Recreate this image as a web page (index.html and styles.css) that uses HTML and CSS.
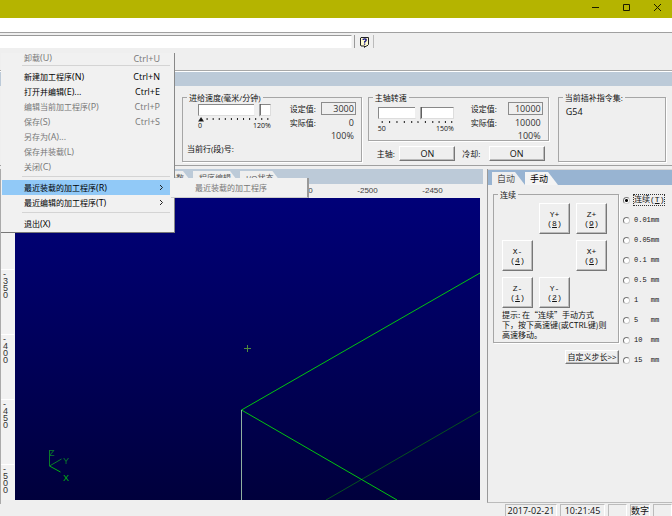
FILE: index.html
```html
<!DOCTYPE html>
<html lang="zh-CN">
<head>
<meta charset="utf-8">
<title>加工程序</title>
<link rel="stylesheet" href="styles.css">
</head>
<body>
<header class="titlebar">
  <button class="winbtn" aria-label="最小化"><svg width="9" height="9" viewBox="0 0 9 9"><path d="M1 4.500h7"/></svg></button>
  <button class="winbtn" aria-label="最大化"><svg width="9" height="9" viewBox="0 0 9 9"><path d="M1.500 1.500h6v6h-6z"/></svg></button>
  <button class="winbtn" aria-label="关闭"><svg width="9" height="9" viewBox="0 0 9 9"><path d="M1 1l7 7M8 1l-7 7"/></svg></button>
</header>
<div class="menubar"></div>
<div class="toolbar">
  <input class="command" type="text" aria-label="命令">
  <button class="help" aria-label="帮助"><svg width="11" height="12" viewBox="0 0 11 12"><path d="M2 1.500h7.500v7l-1.500 1.500h-1l-1.500 1.500v-1.500h-3.500l-.5-1v-7z" fill="#fffbd0" stroke="#222"/><path d="M4 4q0-1.200 1.600-1.200t1.600 1.100q0 .8-1.500 1.800v1M5.600 7.600v1.200" fill="none" stroke="#101080" stroke-width="1.300"/></svg></button>
</div>
<div class="band"></div>

<section class="panel">
  <fieldset class="group feed">
    <legend>进给速度(毫米/分钟)</legend>
    <div class="readout">
      <div class="slider">
        <input type="range" min="0" max="120" value="103" aria-label="进给速度">
        <svg class="ticks" viewBox="0 0 72 5" preserveAspectRatio="none"><path d="M1 4l2-3 2 3zM9 1v2M15 1v2M21 1v2M27 1v2M33 1v2M39 1v2M45 1v2M51 1v2M57 1v2M63 1v2M69 1v2"/></svg>
        <div class="scale"><span>0</span><span>120%</span></div>
      </div>
      <label for="feed-set">设定值:</label>
      <input class="value" id="feed-set" type="text" value="3000">
      <span>实际值:</span><span class="num">0</span>
      <span></span><span class="num">100%</span>
    </div>
    <div class="line-no">当前行(段)号:</div>
  </fieldset>
  <div class="spindle">
    <fieldset class="group">
      <legend>主轴转速</legend>
      <div class="readout wide">
        <div class="slider low">
          <input type="range" min="50" max="150" value="104" aria-label="主轴转速">
          <svg class="ticks" viewBox="0 0 72 5" preserveAspectRatio="none"><path d="M4 1v2M11 1v2M18 1v2M25 1v2M32 1v2M38 1v2M45 1v2M52 1v2M58 1v2M64 1v2M70 1v2"/></svg>
          <div class="scale"><span>50</span><span>150%</span></div>
        </div>
        <label for="spin-set">设定值:</label>
        <input class="value" id="spin-set" type="text" value="10000">
        <span>实际值:</span><span class="num">10000</span>
        <span></span><span class="num">100%</span>
      </div>
    </fieldset>
    <div class="switches">
      <span id="sp">主轴:</span><button class="raised on" aria-describedby="sp">ON</button>
      <span id="cool">冷却:</span><button class="raised on" aria-describedby="cool">ON</button>
    </div>
  </div>
  <fieldset class="group codes">
    <legend>当前插补指令集:</legend>
    <p>G54</p>
  </fieldset>
</section>

<main class="work">
  <section class="view">
    <nav class="tabs view-tabs">
      <button class="tab">参数</button><button class="tab">程序编辑</button><button class="tab">I/O状态</button>
    </nav>
    <div class="ruler-x"><span>-2550</span><span>-2500</span><span>-2450</span></div>
    <div class="stage">
      <div class="ruler-y"><span>-350</span><span>-400</span><span>-450</span><span>-500</span></div>
      <svg class="plot" viewBox="0 0 465 302" preserveAspectRatio="xMinYMin slice">
        <path d="M465 213L311 302" stroke="#06501f"/>
        <path d="M465 75L226.500 212L382 302" stroke="#00c410"/>
        <path d="M226.500 212V302" stroke="#8fb0a0"/>
        <path d="M229 150.500h7M232.500 147v7" stroke="#4f8a3c"/>
        <path d="M34.500 252v16M34.500 268l12-7" stroke="#0a7a2a"/>
        <path d="M34.500 268l11 6" stroke="#00b010"/>
        <text x="34" y="258">Z</text><text x="48" y="266">Y</text><text x="48" y="283" class="bright">X</text>
      </svg>
    </div>
  </section>

  <section class="jog">
    <nav class="tabs jog-tabs">
      <button class="tab">自动</button><button class="tab active">手动</button>
    </nav>
    <div class="jog-body">
      <div class="jog-left">
        <fieldset class="group moves">
          <legend>连续</legend>
          <div class="pad">
            <button class="raised yp">Y+<br>(<u>8</u>)</button>
            <button class="raised zp">Z+<br>(<u>9</u>)</button>
            <button class="raised xm">X-<br>(<u>4</u>)</button>
            <button class="raised xp">X+<br>(<u>6</u>)</button>
            <button class="raised zm">Z-<br>(<u>1</u>)</button>
            <button class="raised ym">Y-<br>(<u>2</u>)</button>
          </div>
          <p class="hint">提示: 在“连续”手动方式<br>下，按下高速键(或CTRL键)则<br>高速移动。</p>
        </fieldset>
        <button class="raised custom">自定义步长&gt;&gt;</button>
      </div>
      <div class="steps">
        <label class="first"><input type="radio" name="step" checked><span>连续(<u>T</u>)</span></label>
        <label><input type="radio" name="step"><span>0.01mm</span></label>
        <label><input type="radio" name="step"><span>0.05mm</span></label>
        <label><input type="radio" name="step"><span>0.1 mm</span></label>
        <label><input type="radio" name="step"><span>0.5 mm</span></label>
        <label><input type="radio" name="step"><span>1   mm</span></label>
        <label><input type="radio" name="step"><span>5   mm</span></label>
        <label><input type="radio" name="step"><span>10  mm</span></label>
        <label><input type="radio" name="step"><span>15  mm</span></label>
      </div>
    </div>
  </section>
</main>

<footer class="status">
  <span class="date">2017-02-21</span><span class="time">10:21:45</span><span class="blank"></span><span class="mode">数字</span><span class="blank"></span>
</footer>

<div class="menu">
  <button class="item off cut"><span>卸载<i>(U)</i></span><kbd>Ctrl+U</kbd></button>
  <hr>
  <button class="item"><span>新建加工程序<i>(N)</i></span><kbd>Ctrl+N</kbd></button>
  <button class="item"><span>打开并编辑<i>(E)...</i></span><kbd>Ctrl+E</kbd></button>
  <button class="item off"><span>编辑当前加工程序<i>(P)</i></span><kbd>Ctrl+P</kbd></button>
  <button class="item off"><span>保存<i>(S)</i></span><kbd>Ctrl+S</kbd></button>
  <button class="item off"><span>另存为<i>(A)...</i></span></button>
  <button class="item off"><span>保存并装载<i>(L)</i></span></button>
  <button class="item off"><span>关闭<i>(C)</i></span></button>
  <hr>
  <button class="item picked"><span>最近装载的加工程序<i>(R)</i></span><svg width="5" height="7" viewBox="0 0 5 7"><path d="M1 1l2.500 2.500L1 6"/></svg></button>
  <button class="item"><span>最近编辑的加工程序<i>(T)</i></span><svg width="5" height="7" viewBox="0 0 5 7"><path d="M1 1l2.500 2.500L1 6"/></svg></button>
  <hr>
  <button class="item"><span>退出<i>(X)</i></span></button>
</div>
<div class="submenu"><button class="item off">最近装载的加工程序</button></div>
</body>
</html>
```
FILE: styles.css
```css
* { box-sizing: border-box; }

body {
  margin: 0;
  height: 100vh;
  display: flex;
  flex-direction: column;
  position: relative;
  background: #efefef;
  color: #111;
  font: 8px/10px "Open Sans", "Noto Sans CJK SC", sans-serif;
}

button, input { font: inherit; color: inherit; margin: 0; }
button { padding: 0; border: 0; background: none; }
p { margin: 0; }

.titlebar {
  height: 18px;
  display: flex;
  justify-content: flex-end;
  gap: 22px;
  padding: 0 10px 3px 0;
  background: #b5b400;
}
.winbtn { width: 9px; display: flex; align-items: center; }
.winbtn svg { fill: none; stroke: #1c1c00; }

.menubar { height: 15px; background: #fff; border-bottom: 1px solid #a0a0a0; }

.toolbar { height: 37px; display: flex; align-items: flex-start; padding-top: 2px; }
.command {
  width: 352px;
  height: 13px;
  border: 0;
  border-top: 1px solid #999;
  border-right: 1px solid #f6f6f6;
  background: #fff;
  outline: 0;
}
.help {
  height: 13px;
  margin-left: 2px;
  padding: 0 3px 0 4px;
  border-left: 1px solid #999;
  border-right: 1px solid #bbb;
}
.help svg { display: block; }

.band { height: 16px; background: #bccad8; border-top: 1px solid #a8a8a8; box-shadow: inset 0 1px #fff; }

/* Machine readouts */
.panel {
  display: flex;
  align-items: flex-start;
  height: 80px;
  padding: 7px 6px 0 182px;
  border-bottom: 1px solid #a0a0a0;
}
.group {
  margin: 0;
  padding: 0;
  min-width: 0;
  border: 1px solid #a6a6a6;
  box-shadow: 1px 1px #fff;
}
.group legend { margin-left: 4px; padding: 0 2px; line-height: 9px; }
.feed { flex: 179 1 0; height: 69px; margin-right: 6px; }
.spindle { flex: 182 1 0; margin-right: 9px; }
.codes { flex: 107 1 0; height: 69px; }
.codes p { padding: 5px 7px; font-size: 9px; }

.readout {
  display: grid;
  grid-template-columns: 1fr 28px 38px;
  grid-template-rows: 13px 16px 9px;
  align-items: center;
  padding-right: 5px;
  white-space: nowrap;
}
.wide { grid-template-columns: 1fr 34px 38px; }
.slider { grid-row: 1 / 4; align-self: start; padding: 0 19px 0 15px; }
.low { padding: 3px 17px 0 9px; }
.slider input {
  appearance: none;
  display: block;
  width: 100%;
  height: 15px;
  background: none;
}
.slider input::-webkit-slider-runnable-track {
  height: 12px;
  background: #fff;
  border: 1px solid #ddd;
  border-top-color: #888;
  border-left-color: #888;
}
.slider input::-webkit-slider-thumb {
  appearance: none;
  width: 7px;
  height: 15px;
  margin-top: -1px;
  border: 0;
  background: linear-gradient(90deg, #efefef 5px, #555 6px);
  clip-path: polygon(0 0, 100% 0, 100% 75%, 50% 100%, 0 75%);
}
.ticks { display: block; width: 100%; height: 5px; stroke: #222; }
.scale { display: flex; justify-content: space-between; font-size: 7px; line-height: 8px; }
.value {
  justify-self: end;
  width: 35px;
  height: 13px;
  padding: 0 1px;
  border: 1px solid #8c8c8c;
  background: #efefef;
  text-align: right;
}
.value, .num { font-size: 9px; color: #333; }
.num { text-align: right; padding-right: 2px; }
.line-no { padding: 4px 4px 0; }
.switches { display: flex; align-items: center; padding: 5px 4px 0 9px; }
.switches .on { width: 56px; height: 15px; margin: 0 7px 0 2px; font-size: 9px; }
.switches .on:last-child { margin: 0 0 0 6px; }
.switches span { flex: 1; white-space: nowrap; }

.raised {
  background: #efefef;
  border: 1px solid #fff;
  border-right-color: #777;
  border-bottom-color: #777;
  box-shadow: inset -1px -1px #bbb;
}

/* Work area */
.work {
  flex: 1;
  min-height: 0;
  display: grid;
  grid-template-columns: 1fr 185px;
  grid-template-rows: minmax(0, 1fr);
  gap: 4px;
  padding-top: 3px;
}
.view { display: flex; flex-direction: column; border-left: 1px solid #aaa; min-width: 0; }
.tabs { display: flex; align-items: flex-end; background: #bccad8; }
.tab {
  height: 13px;
  padding: 0 10px 0 5px;
  background: #efefef;
  color: #555;
  clip-path: polygon(0 0, calc(100% - 10px) 0, 100% 100%, 0 100%);
}
.view-tabs { height: 15px; padding-left: 161px; }
.view-tabs .tab { padding: 0 9px 0 6px; }
.ruler-x {
  height: 14px;
  display: flex;
  justify-content: flex-end;
  align-items: center;
  padding-right: 18px;
  color: #444;
  font-family: "Liberation Sans", sans-serif;
}
.ruler-x span { width: 65px; text-align: center; }
.stage { flex: 1; min-height: 0; display: flex; padding: 0 3px 4px 0; }
.ruler-y {
  width: 14px;
  padding-top: 71px;
  color: #333;
  background: #f2f2f2;
  font: 9px/7px "Liberation Sans", sans-serif;
  overflow: hidden;
}
.ruler-y span {
  display: block;
  width: 13px;
  height: 65px;
  padding: 1px 6px 0 2px;
  border-top: 1px solid #fff;
  word-break: break-all;
}
.plot { flex: 1; min-width: 0; height: 100%; background: linear-gradient(#000078, #00003c); fill: none; }
.plot text { fill: #0a7a2a; font: 9px "Liberation Sans", sans-serif; }
.plot .bright { fill: #00b010; }

.jog { border-left: 1px solid #999; border-bottom: 1px solid #bbb; margin-bottom: 1px; }
.jog-tabs { height: 16px; padding-left: 4px; background: #98b4d2; border-top: 1px solid #d8d8d8; font-size: 9px; }
.jog-tabs .active { color: #000; background: #f4f4f4; }
.jog-body { display: flex; padding: 5px 0 0 5px; }
.jog-left { width: 126px; }
.moves { padding-bottom: 2px; }
.pad {
  display: grid;
  grid-template-columns: repeat(3, 31px);
  grid-template-rows: repeat(3, 31px);
  grid-template-areas: ". yp zp" "xm . xp" "zm ym .";
  gap: 6px;
  padding: 4px 0 0 8px;
  font: 8px/9px "Liberation Mono", monospace;
}
.yp { grid-area: yp; }
.zp { grid-area: zp; }
.xm { grid-area: xm; }
.xp { grid-area: xp; }
.zm { grid-area: zm; }
.ym { grid-area: ym; }
.hint {
  padding: 2px 0 0 8px;
  font: 8px/10px "Noto Sans CJK SC", sans-serif;
  white-space: nowrap;
}
.custom { display: block; width: 54px; height: 14px; margin: 7px 0 0 auto; white-space: nowrap; }
.steps { padding-left: 4px; }
.steps label {
  display: flex;
  align-items: center;
  gap: 4px;
  height: 20px;
  font: 7px/10px "Liberation Mono", "Noto Sans CJK SC", monospace;
  white-space: pre;
}
.steps .first { font-size: 8px; }
.steps .first span { outline: 1px dotted #333; }
.steps input {
  appearance: none;
  width: 7px;
  height: 7px;
  border: 1px solid #777;
  border-right-color: #ccc;
  border-bottom-color: #ccc;
  border-radius: 50%;
  background: #fff;
}
.steps input:checked { background: radial-gradient(#000 0 1px, #fff 2px); }

.status {
  display: flex;
  justify-content: flex-end;
  gap: 3px;
  height: 12px;
  font-size: 9px;
  line-height: 11px;
}
.status span { border: 1px solid #bbb; border-right-color: #fff; border-bottom: 0; height: 12px; }
.date { width: 52px; text-align: center; }
.time { width: 45px; text-align: center; }
.blank { width: 19px; }
.mode { width: 20px; text-align: center; }

/* Open menu */
.menu, .submenu { position: absolute; background: #f1f1f1; }
.menu {
  top: 53px;
  left: 1px;
  width: 174px;
  height: 180px;
  padding: 0 4px 0 1px;
  overflow: hidden;
  border-right: 1px solid #888;
  border-bottom: 1px solid #777;
}
.menu hr { margin: 2px 0 3px 20px; border: 0; border-top: 1px solid #d4d4d4; }
.menu .item {
  display: flex;
  align-items: center;
  justify-content: space-between;
  width: 100%;
  height: 15px;
  padding: 0 10px 0 22px;
  white-space: nowrap;
  color: #000;
}
.menu .cut { height: 10px; margin-bottom: 2px; }
.menu .off, .submenu .off { color: #777; }
.menu .picked { background: #91c9f7; }
.menu svg { margin-right: -4px; fill: none; stroke: #222; }
.menu i, .menu kbd { font: 9px/9px "Open Sans", sans-serif; }
.submenu {
  top: 178px;
  left: 171px;
  height: 20px;
  width: 138px;
  padding: 5px 0 0 24px;
  border-right: 2px solid #999;
  border-bottom: 1px solid #ccc;
}
.submenu .item { display: block; }
```
